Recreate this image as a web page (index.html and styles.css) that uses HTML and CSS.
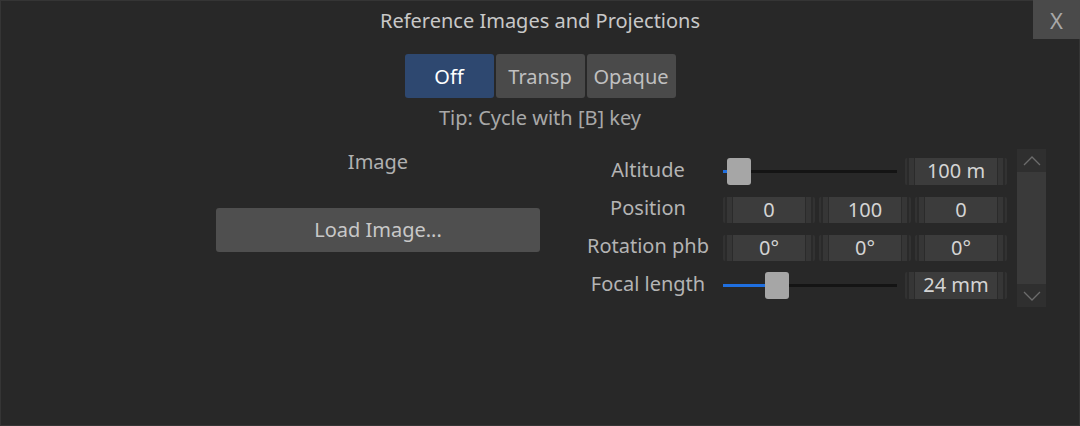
FILE: index.html
```html
<!DOCTYPE html>
<html lang="en">
<head>
    <meta charset="UTF-8">
    <title>Reference Images and Projections</title>
    <link rel="stylesheet" href="styles.css">
</head>
<body>
    <div class="window">
        <div class="header">Reference Images and Projections</div>
        <button class="close-btn">X</button>

        <div class="mode-row">
            <button class="mode-btn active">Off</button>
            <button class="mode-btn">Transp</button>
            <button class="mode-btn">Opaque</button>
        </div>
        <div class="tip">Tip: Cycle with [B] key</div>

        <div class="content">
            <div class="image-col">
                <div class="image-label">Image</div>
                <button class="load-btn">Load Image...</button>
            </div>

            <div class="props">
                <div class="prop-label">Altitude</div>
                <div class="prop-ctrl">
                    <div class="slider">
                        <div class="slider-fill" style="width: 6px;"></div>
                        <div class="slider-thumb" style="left: 4px;"></div>
                    </div>
                    <div class="field field-wide">100 m</div>
                </div>

                <div class="prop-label">Position</div>
                <div class="prop-ctrl triple">
                    <div class="field">0</div>
                    <div class="field">100</div>
                    <div class="field">0</div>
                </div>

                <div class="prop-label">Rotation phb</div>
                <div class="prop-ctrl triple">
                    <div class="field">0°</div>
                    <div class="field">0°</div>
                    <div class="field">0°</div>
                </div>

                <div class="prop-label">Focal length</div>
                <div class="prop-ctrl">
                    <div class="slider">
                        <div class="slider-fill" style="width: 44px;"></div>
                        <div class="slider-thumb" style="left: 42px;"></div>
                    </div>
                    <div class="field field-wide">24 mm</div>
                </div>
            </div>

            <div class="scrollbar">
                <div class="scroll-cap">
                    <svg width="18" height="10" viewBox="0 0 18 10"><path d="M1 9 L9 1 L17 9" fill="none" stroke="#6c6c6c" stroke-width="1.3"/></svg>
                </div>
                <div class="scroll-thumb"></div>
                <div class="scroll-cap">
                    <svg width="18" height="10" viewBox="0 0 18 10"><path d="M1 1 L9 9 L17 1" fill="none" stroke="#6c6c6c" stroke-width="1.3"/></svg>
                </div>
            </div>
        </div>
    </div>
</body>
</html>
```

FILE: styles.css
```css
body {
    margin: 0;
    padding: 0;
    background-color: #282828;
    font-family: "Noto Sans", "Open Sans", sans-serif;
    font-size: 20px;
}
.window {
    position: relative;
    width: 1080px;
    height: 426px;
    box-sizing: border-box;
    background-color: #282828;
    box-shadow: inset 0 0 0 1px #353535;
    overflow: hidden;
}
.header {
    height: 42px;
    line-height: 42px;
    text-align: center;
    color: #c8c8c8;
}
.close-btn {
    position: absolute;
    top: 0;
    right: 0;
    width: 47px;
    height: 39px;
    border: none;
    background-color: #4a4a4a;
    color: #a8a8a8;
    font-family: inherit;
    font-size: 22px;
    padding: 0;
}
.mode-row {
    display: flex;
    justify-content: center;
    gap: 2px;
    margin-top: 12px;
}
.mode-btn {
    width: 89px;
    height: 44px;
    border: none;
    border-radius: 3px;
    background-color: #4a4a4a;
    color: #c0c0c0;
    font-family: inherit;
    font-size: 20px;
    padding: 0;
}
.mode-btn.active {
    background-color: #2e4870;
    color: #ffffff;
}
.tip {
    margin-top: 7px;
    line-height: 26px;
    text-align: center;
    color: #a8a8a8;
}
.content {
    display: flex;
    margin-top: 18px;
    padding-left: 216px;
}
.image-col {
    width: 324px;
    display: flex;
    flex-direction: column;
}
.image-label {
    line-height: 26px;
    text-align: center;
    color: #b0b0b0;
}
.load-btn {
    margin-top: 33px;
    height: 44px;
    border: none;
    border-radius: 3px;
    background-color: #4f4f4f;
    color: #c8c8c8;
    font-family: inherit;
    font-size: 20px;
    padding-bottom: 2px;
}
.props {
    margin-left: 45px;
    padding-top: 9px;
    display: grid;
    grid-template-columns: 126px 284px;
    grid-auto-rows: 27px;
    column-gap: 12px;
    row-gap: 11px;
    align-items: center;
}
.prop-label {
    text-align: center;
    color: #b4b4b4;
    white-space: nowrap;
    line-height: 26px;
    padding-bottom: 3px;
}
.prop-ctrl {
    display: flex;
    align-items: center;
    gap: 8px;
    height: 27px;
}
.prop-ctrl.triple {
    gap: 4px;
    height: 26px;
}
.slider {
    position: relative;
    flex: 1;
    height: 3px;
    background-color: #141414;
}
.slider-fill {
    height: 3px;
    background-color: #1f6fe0;
}
.slider-thumb {
    position: absolute;
    top: -12px;
    width: 24px;
    height: 27px;
    border-radius: 3px;
    background-color: #a6a6a6;
}
.field {
    flex: 1;
    height: 100%;
    line-height: 25px;
    text-align: center;
    color: #d4d4d4;
    border-radius: 2px;
    background: linear-gradient(to right,
        #323232 0 2px, #2a2a2a 2px 4px, #363636 4px 9px, #2b2b2b 9px 10px,
        #3c3c3c 10px calc(100% - 10px),
        #2b2b2b calc(100% - 10px) calc(100% - 9px), #363636 calc(100% - 9px) calc(100% - 4px),
        #2a2a2a calc(100% - 4px) calc(100% - 2px), #323232 calc(100% - 2px) 100%);
}
.field-wide {
    flex: 0 0 102px;
}
.scrollbar {
    margin-left: 10px;
    width: 29px;
    height: 158px;
    display: flex;
    flex-direction: column;
}
.scroll-cap {
    height: 23px;
    background-color: #2f2f2f;
    display: flex;
    align-items: center;
    justify-content: center;
}
.scroll-thumb {
    flex: 1;
    background-color: #3a3a3a;
}
```
